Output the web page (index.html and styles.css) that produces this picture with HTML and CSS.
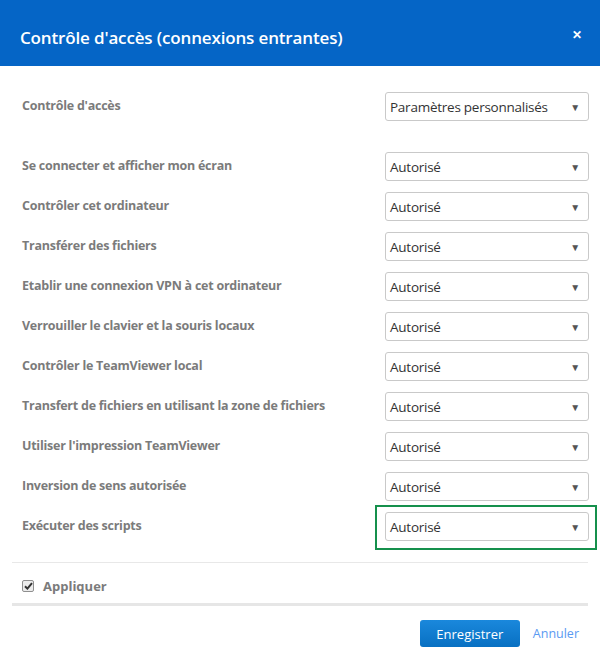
FILE: index.html
```html
<!DOCTYPE html>
<html lang="fr">
<head>
  <meta charset="UTF-8">
  <meta name="viewport" content="width=device-width, initial-scale=1">
  <title>Contrôle d'accès</title>
  <link rel="stylesheet" href="styles.css">
</head>
<body>

<div class="dialog">

  <!-- Header -->
  <div class="header">
    <h1>Contrôle d'accès (connexions entrantes)</h1>
    <span class="close">&#x2715;</span>
  </div>

  <div class="content">
    <div class="row first">
      <label>Contrôle d'accès</label>
      <div class="select"><span>Paramètres personnalisés</span><span class="arrow">&#9660;</span></div>
    </div>

    <div class="row">
      <label>Se connecter et afficher mon écran</label>
      <div class="select"><span>Autorisé</span><span class="arrow">&#9660;</span></div>
    </div>
    <div class="row">
      <label>Contrôler cet ordinateur</label>
      <div class="select"><span>Autorisé</span><span class="arrow">&#9660;</span></div>
    </div>
    <div class="row">
      <label>Transférer des fichiers</label>
      <div class="select"><span>Autorisé</span><span class="arrow">&#9660;</span></div>
    </div>
    <div class="row">
      <label>Etablir une connexion VPN à cet ordinateur</label>
      <div class="select"><span>Autorisé</span><span class="arrow">&#9660;</span></div>
    </div>
    <div class="row">
      <label>Verrouiller le clavier et la souris locaux</label>
      <div class="select"><span>Autorisé</span><span class="arrow">&#9660;</span></div>
    </div>
    <div class="row">
      <label>Contrôler le TeamViewer local</label>
      <div class="select"><span>Autorisé</span><span class="arrow">&#9660;</span></div>
    </div>
    <div class="row">
      <label>Transfert de fichiers en utilisant la zone de fichiers</label>
      <div class="select"><span>Autorisé</span><span class="arrow">&#9660;</span></div>
    </div>
    <div class="row">
      <label>Utiliser l'impression TeamViewer</label>
      <div class="select"><span>Autorisé</span><span class="arrow">&#9660;</span></div>
    </div>
    <div class="row">
      <label>Inversion de sens autorisée</label>
      <div class="select"><span>Autorisé</span><span class="arrow">&#9660;</span></div>
    </div>
    <div class="row">
      <label>Exécuter des scripts</label>
      <div class="highlight">
        <div class="select"><span>Autorisé</span><span class="arrow">&#9660;</span></div>
      </div>
    </div>
  </div>

  <!-- Apply -->
  <div class="apply">
    <span class="check">
      <svg width="9" height="8" viewBox="0 0 9 8"><path d="M1 4.2 L3.4 6.6 L8 1.2" fill="none" stroke="#333" stroke-width="2"/></svg>
    </span>
    <span>Appliquer</span>
  </div>

  <!-- Footer -->
  <div class="footer">
    <button class="save">Enregistrer</button>
    <a class="cancel">Annuler</a>
  </div>

</div>

</body>
</html>
```

FILE: styles.css
```css
* {
  box-sizing: border-box;
  padding: 0;
  margin: 0;
}

body {
  font-family: "Open Sans", "Noto Sans", Arial, sans-serif;
  background: #fff;
}

.dialog {
  width: 600px;
  height: 661px;
  background: #fff;
}

.header {
  height: 66px;
  background: #0565c6;
  color: #fff;
  display: flex;
  justify-content: space-between;
  align-items: center;
  padding: 8px 18px 0 20px;
}

.header h1 {
  font-size: 17px;
  font-weight: 600;
  letter-spacing: -0.15px;
}

.close {
  font-size: 12px;
  font-weight: 700;
  margin-top: -6px;
}

/* Rows */
.content {
  padding: 26px 11px 0 22px;
}

.row {
  display: flex;
  justify-content: space-between;
  align-items: center;
  margin-bottom: 11px;
}

.row.first {
  margin-bottom: 31px;
}

.row label {
  font-size: 12.5px;
  font-weight: 700;
  color: #7b7b7b;
  letter-spacing: -0.25px;
  margin-top: -3px;
}

.select {
  width: 204px;
  height: 29px;
  border: 1px solid #c9c9c9;
  border-radius: 3px;
  display: flex;
  justify-content: space-between;
  align-items: center;
  padding: 0 8px 0 4px;
  font-size: 13.5px;
  color: #333;
  letter-spacing: -0.25px;
}

.arrow {
  font-size: 10px;
  color: #555;
}

.highlight {
  border: 2px solid #15904c;
  margin: -7px -8px -9px -10px;
  padding: 5px 6px 7px 8px;
}

/* Apply */
.apply {
  margin: 21px 12px 0 12px;
  border-top: 1px solid #e8e8e8;
  border-bottom: 3px solid #e6e6e6;
  height: 44px;
  display: flex;
  align-items: center;
  padding: 5px 0 0 10px;
  font-size: 13px;
  font-weight: 700;
  color: #7b7b7b;
}

.check {
  width: 12px;
  height: 12px;
  border: 1px solid #8f8f8f;
  border-radius: 2px;
  background: #ececec;
  display: flex;
  align-items: center;
  justify-content: center;
  margin-right: 9px;
}

/* Footer */
.footer {
  display: flex;
  justify-content: flex-end;
  align-items: center;
  padding: 14px 21px 0 0;
}

.save {
  width: 100px;
  height: 27px;
  border: none;
  border-radius: 3px;
  background: linear-gradient(#1a88dc, #0870c2);
  color: #fff;
  font-family: inherit;
  font-size: 13px;
  cursor: pointer;
  margin-right: 13px;
}

.cancel {
  font-size: 12.5px;
  color: #5a9af2;
  cursor: pointer;
}
```
